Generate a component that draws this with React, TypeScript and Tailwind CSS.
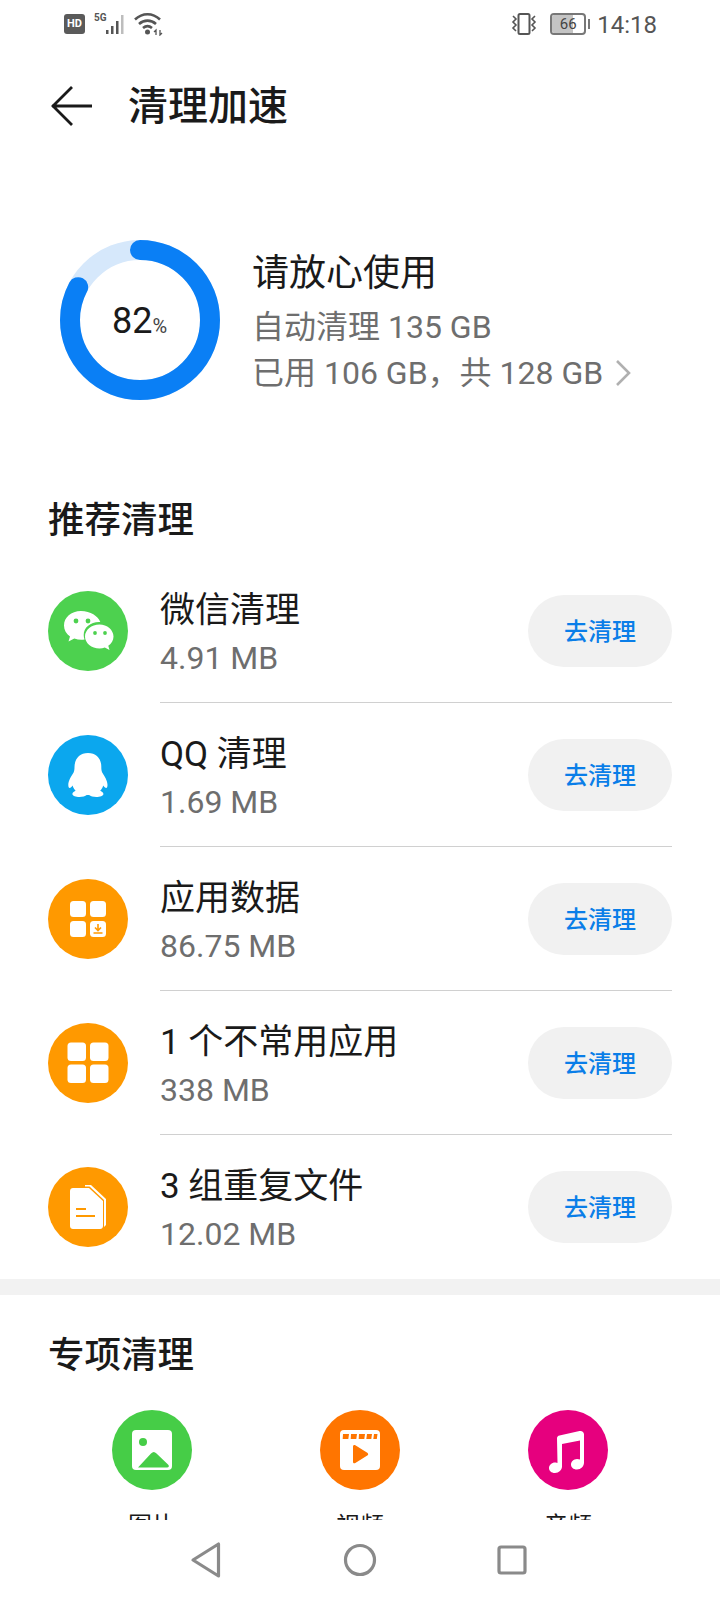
import type { ReactNode } from 'react'

function Disc({ color, children }: { color: string; children: ReactNode }) {
  return (
    <svg width="80" height="80" viewBox="0 0 80 80" className="shrink-0">
      <circle cx="40" cy="40" r="40" fill={color} />
      {children}
    </svg>
  )
}

const WeChat = (
  <Disc color="#4dd14f">
    <path d="M33 20c-10 0-17 6.500-17 14.500 0 4.500 2.300 8.300 6 11l-1.500 5 5.800-3c2.400.8 4.700 1.200 7.200 1.200 1 0 2-.1 3-.2-.5-1.500-.8-3-.8-4.500 0-7.500 6.800-13 15.300-13 .4 0 .9 0 1.300.1C50 25 42.500 20 33 20z" fill="#fff" />
    <path d="M51.500 33.500c-8 0-14.500 5.500-14.500 12s6.500 12 14.500 12c1.900 0 3.700-.3 5.300-.9l4.700 2.400-1.200-4.200c3.200-2.300 5.200-5.600 5.200-9.300 0-6.500-6.300-12-14-12z" fill="#fff" />
    <circle cx="28" cy="30" r="2.400" fill="#4dd14f" />
    <circle cx="40" cy="30" r="2.400" fill="#4dd14f" />
    <circle cx="47" cy="42" r="1.900" fill="#4dd14f" />
    <circle cx="57" cy="42" r="1.900" fill="#4dd14f" />
  </Disc>
)

const QQ = (
  <Disc color="#0ba7ee">
    <path d="M40 18c-8.500 0-13.500 6-13.500 14 0 2-.2 4-.9 5.500-2.400 3.600-5.300 8.500-5.300 12.500 0 2 .6 3 1.300 3 1 0 2-1 3-2.500.5 2 1.500 3.800 3 5.200-2 .8-3.200 2-3.200 3.300 0 2 3.500 3 7 3 3.200 0 6-.9 7.300-2 .7.1 1.700.1 2.400 0 1.300 1.100 4.100 2 7.300 2 3.500 0 7-1 7-3 0-1.300-1.200-2.500-3.200-3.300 1.500-1.400 2.500-3.200 3-5.200 1 1.500 2 2.500 3 2.500.7 0 1.300-1 1.300-3 0-4-2.900-8.900-5.300-12.500-.7-1.500-.9-3.500-.9-5.500C53.500 24 48.500 18 40 18z" fill="#fff" />
  </Disc>
)

const AppData = (
  <Disc color="#ff9900">
    <rect x="22" y="22" width="16" height="16" rx="3.500" fill="#fff" />
    <rect x="42" y="22" width="16" height="16" rx="3.500" fill="#fff" />
    <rect x="22" y="42" width="16" height="16" rx="3.500" fill="#fff" />
    <rect x="42" y="42" width="16" height="16" rx="3.500" fill="#fff" />
    <path d="M50 45v6M47 48.500l3 3 3-3M45.500 54h9" stroke="#ff9900" strokeWidth="1.600" fill="none" />
  </Disc>
)

const Apps = (
  <Disc color="#ff9900">
    <rect x="19.500" y="19.500" width="18.500" height="18.500" rx="3.500" fill="#fff" />
    <rect x="42" y="19.500" width="18.500" height="18.500" rx="3.500" fill="#fff" />
    <rect x="19.500" y="41.500" width="18.500" height="18.500" rx="3.500" fill="#fff" />
    <rect x="42" y="41.500" width="18.500" height="18.500" rx="3.500" fill="#fff" />
  </Disc>
)

const Files = (
  <Disc color="#ff9900">
    <path d="M37 18h6l15 14v26l-2 2V33L41.500 19.500H37z" fill="#fff" />
    <path d="M25 21h16l14 13v25c0 1.700-1.300 3-3 3H25c-1.700 0-3-1.300-3-3V24c0-1.700 1.300-3 3-3z" fill="#fff" />
    <path d="M28 42h10M28 49h19" stroke="#ff9900" strokeWidth="2.200" />
  </Disc>
)

const Picture = (
  <Disc color="#46cd47">
    <rect x="20" y="20" width="40" height="40" rx="4" fill="#fff" />
    <circle cx="31" cy="32" r="4" fill="#46cd47" />
    <path d="M26 57.500l13-14c2-2 3.500-2 5.500 0l11.500 11c1.500 1.500 1 3-1 3z" fill="#46cd47" />
  </Disc>
)

const Video = (
  <Disc color="#ff7500">
    <rect x="20" y="20" width="40" height="40" rx="4" fill="#fff" />
    <path d="M23 24h6l-.7 5h-5.600zM31 24h6l-.7 5h-5.600zM39 24h6l-.7 5h-5.600zM47 24h5l-.7 5h-5zM54 24h3.500l-.7 5H53.300z" fill="#ff7500" />
    <path d="M33 36.500c0-1.500 1.200-2 2.300-1.300l12 7.500c1.200.8 1.200 2 0 2.800l-12 7.500c-1.100.7-2.300.2-2.300-1.300z" fill="#ff7500" />
  </Disc>
)

const Music = (
  <Disc color="#e6007e">
    <path d="M29 28.500c0-1.500 1-2.600 2.500-2.900l20-4.500c2.500-.5 4.500 1 4.500 3.500v27.900c0 3.900-3.200 7-7 7s-6-2.300-6-5 2.600-5.500 6-5.500c1.200 0 2.300.2 3 .6V30.500l-18 3.500v22.500c0 3.500-3.200 6.500-7 6.500s-6-2.200-6-5c0-3 2.800-5.500 6-5.500 1.100 0 2.100.2 2.500.6z" fill="#fff" />
  </Disc>
)

const rows = [
  { icon: WeChat, title: '微信清理', size: '4.91 MB' },
  { icon: QQ, title: 'QQ 清理', size: '1.69 MB' },
  { icon: AppData, title: '应用数据', size: '86.75 MB' },
  { icon: Apps, title: '1 个不常用应用', size: '338 MB' },
  { icon: Files, title: '3 组重复文件', size: '12.02 MB' },
]

const special = [
  { icon: Picture, label: '图片' },
  { icon: Video, label: '视频' },
  { icon: Music, label: '音频' },
]

function StatusBar() {
  return (
    <div className="flex h-[48px] items-center justify-between pl-[64px] pr-[63px] text-[#555]">
      <div className="flex items-center">
        <span className="flex h-[20px] w-[21px] items-center justify-center rounded-[3px] bg-[#5a5a5a] text-[11px] font-bold text-white">HD</span>
        <svg width="30" height="24" viewBox="0 0 30 24" className="ml-[9px]">
          <text x="0" y="9" fontSize="10" fontWeight="700" fill="#555" fontFamily="Roboto, sans-serif">5G</text>
          <rect x="12" y="18" width="2.500" height="4" fill="#555" />
          <rect x="17" y="14" width="2.500" height="8" fill="#555" />
          <rect x="22" y="9" width="2.500" height="13" fill="#555" />
          <rect x="27" y="3" width="2.500" height="19" fill="#bdbdbd" />
        </svg>
        <svg width="32" height="24" viewBox="0 0 32 24" className="ml-[10px]">
          <path d="M1 7.500c7.500-7 17.500-7 25 0M5 12c5-4.500 12-4.500 17 0M9 16c3-2.500 6-2.500 9 0" stroke="#555" strokeWidth="2.600" fill="none" />
          <circle cx="13.500" cy="20" r="2.500" fill="#555" />
          <path d="M22 23v-5l-2 2M26 18v5l2-2" stroke="#555" strokeWidth="1.300" fill="none" />
        </svg>
      </div>
      <div className="flex items-center">
        <svg width="28" height="24" viewBox="0 0 28 24">
          <rect x="8.500" y="2" width="11" height="20" rx="1.500" stroke="#555" strokeWidth="2" fill="none" />
          <path d="M3 4l3 3-3 3 3 3-3 3 3 3M25 4l-3 3 3 3-3 3 3 3-3 3" stroke="#555" strokeWidth="1.600" fill="none" />
        </svg>
        <div className="relative ml-[12px] flex h-[22px] w-[36px] items-center justify-center overflow-hidden rounded-[4px] border-2 border-[#777]">
          <div className="absolute inset-y-0 left-0 w-[66%] bg-[#c4c4c4]" />
          <span className="relative text-[15px] leading-none text-[#444]">66</span>
        </div>
        <div className="ml-[2px] h-[10px] w-[2px] bg-[#777]" />
        <span className="ml-[7px] pt-[1px] text-[24px] leading-none">14:18</span>
      </div>
    </div>
  )
}

function Ring() {
  return (
    <div className="relative h-[160px] w-[160px] shrink-0">
      <svg width="160" height="160" viewBox="0 0 160 160" className="-rotate-90">
        <circle cx="80" cy="80" r="70" fill="none" stroke="#d6e8fb" strokeWidth="20" />
        <circle cx="80" cy="80" r="70" fill="none" stroke="#0a7ff5" strokeWidth="20" strokeLinecap="round" strokeDasharray="363.500 439.800" />
      </svg>
      <div className="absolute inset-0 flex items-baseline justify-center pr-[1px] pt-[60px] text-[#1a1a1a]">
        <span className="text-[36px] leading-[42px]">82</span>
        <span className="text-[20px] leading-none text-[#444]">%</span>
      </div>
    </div>
  )
}

function Row({ icon, title, size, last }: { icon: ReactNode; title: string; size: string; last: boolean }) {
  return (
    <div className="flex h-[144px] items-center pl-[48px] pr-[48px]">
      {icon}
      <div className={`ml-[32px] flex h-full flex-1 items-center justify-between ${last ? '' : 'border-b border-[#d0d0d0]'}`}>
        <div className="pt-[4px]">
          <div className="text-[35px] leading-[46px] text-[#1a1a1a]">{title}</div>
          <div className="mt-[4px] text-[32px] leading-[40px] text-[#6e6e6e]">{size}</div>
        </div>
        <button className="flex h-[72px] w-[144px] items-center justify-center rounded-full bg-[#f1f1f1] pt-[2px] text-[24px] font-medium text-[#0a7ee8]">去清理</button>
      </div>
    </div>
  )
}

export default function App() {
  return (
    <div className="flex h-[1600px] w-[720px] flex-col overflow-hidden bg-white font-['Roboto','Noto_Sans_CJK_SC',sans-serif]">
      <div className="h-[1520px] overflow-hidden">
        <StatusBar />
        <div className="flex h-[116px] items-center pl-[50px]">
          <svg width="44" height="44" viewBox="0 0 44 44">
            <path d="M2 22h40M22 3L3 22l19 19" stroke="#1a1a1a" strokeWidth="2.800" fill="none" />
          </svg>
          <h1 className="ml-[34px] pt-[2px] text-[40px] font-medium leading-none text-[#1a1a1a]">清理加速</h1>
        </div>

        <div className="mt-[76px] flex items-start pl-[60px]">
          <Ring />
          <div className="ml-[32px] mt-[9px]">
            <div className="text-[37px] leading-[50px] text-[#1a1a1a]">请放心使用</div>
            <div className="mt-[5px] text-[32px] leading-[46px] text-[#6e6e6e]">自动清理 135 GB</div>
            <div className="flex items-center text-[32px] leading-[46px] text-[#6e6e6e]">
              已用 106 GB，共 128 GB
              <svg width="18" height="28" viewBox="0 0 18 28" className="ml-[11px]">
                <path d="M3 2l12 12L3 26" stroke="#b0b0b0" strokeWidth="2.600" fill="none" />
              </svg>
            </div>
          </div>
        </div>

        <h2 className="mt-[97px] pl-[48px] text-[36.5px] font-medium leading-[48px] text-[#1a1a1a]">推荐清理</h2>
        <div className="mt-[14px]">
          {rows.map((row, i) => (
            <Row key={row.title} icon={row.icon} title={row.title} size={row.size} last={i === rows.length - 1} />
          ))}
        </div>

        <div className="h-[16px] bg-[#f2f2f2]" />
        <h2 className="mt-[37px] pl-[48px] text-[36.5px] font-medium leading-[48px] text-[#1a1a1a]">专项清理</h2>
        <div className="mt-[30px] flex pl-[112px]">
          {special.map(item => (
            <div key={item.label} className="flex w-[208px] shrink-0 flex-col">
              <div className="w-[80px]">{item.icon}</div>
              <div className="mt-[20px] w-[80px] text-center text-[24px] leading-[32px] text-[#1a1a1a]">{item.label}</div>
            </div>
          ))}
        </div>
      </div>

      <div className="flex h-[80px] items-start bg-white pl-[190px] pt-[21px]">
        <svg width="32" height="38" viewBox="0 0 32 38">
          <path d="M28.500 3v32L3 19z" stroke="#8a8a8a" strokeWidth="3.200" strokeLinejoin="round" fill="none" />
        </svg>
        <svg width="36" height="38" viewBox="0 0 36 38" className="ml-[120px]">
          <circle cx="18" cy="19" r="14.500" stroke="#8a8a8a" strokeWidth="3.200" fill="none" />
        </svg>
        <svg width="32" height="38" viewBox="0 0 32 38" className="ml-[118px]">
          <rect x="3" y="6" width="26" height="26" rx="2" stroke="#8a8a8a" strokeWidth="3.200" fill="none" />
        </svg>
      </div>
    </div>
  )
}
